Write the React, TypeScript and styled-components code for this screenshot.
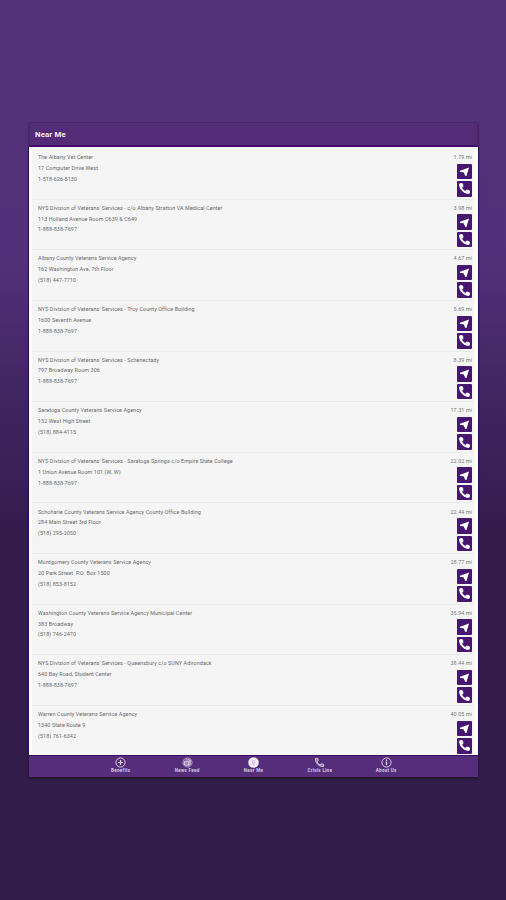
import React from "react";
import styled, { createGlobalStyle } from "styled-components";

const GlobalStyle = createGlobalStyle`
  * { box-sizing: border-box; }
  body { margin: 0; font-family: Roboto, "Liberation Sans", sans-serif; }
`;

const Backdrop = styled.div`
  width: 506px;
  height: 900px;
  padding: 122px 28px 0 29px;
  overflow: hidden;
  background: linear-gradient(#543278 0, #53317a 255px, #3f2560 405px, #331c4c 535px, #321c49 900px);
`;

const Screen = styled.main`
  display: flex;
  flex-direction: column;
  width: 449px;
  height: 655px;
  box-shadow: 0 2px 2px #21142c;
`;

const Header = styled.header`
  display: flex;
  align-items: center;
  height: 25px;
  flex: none;
  padding: 0 5px;
  background: #542b77;
  border: 1px solid #482667;
  border-bottom: 2px solid #430b6b;
`;

const Title = styled.h1`
  margin: 2px 0 0;
  font-size: 7.8px;
  line-height: 10px;
  font-weight: 700;
  letter-spacing: 0.15px;
  color: #f4effa;
`;

const Panel = styled.section`
  flex: 1;
  min-height: 0;
  overflow: hidden;
  padding: 0 4px 0 3px;
  background: #fdfdfe;
  box-shadow: -1px 0 #2b0d5b, 1px 0 #2b0d5b;
`;

const List = styled.ul`
  margin: 0;
  padding: 2px 0 0;
  list-style: none;
  background: #f5f5f5;
`;

const Row = styled.li`
  display: flex;
  justify-content: space-between;
  height: 50.64px;
  padding: 3.2px 2px 0 6px;
  border-bottom: 1px solid #ececed;
`;

const Details = styled.div`
  display: flex;
  flex-direction: column;
`;

const Line = styled.span`
  height: 10.8px;
  font-size: 5.4px;
  line-height: 10px;
  letter-spacing: 0.09px;
  white-space: pre;
  color: #68686c;
`;

const Actions = styled.div`
  display: flex;
  flex-direction: column;
  align-items: flex-end;
`;

const Distance = styled.span`
  height: 12px;
  font-size: 5.4px;
  line-height: 10px;
  letter-spacing: 0.08px;
  white-space: nowrap;
  color: #77777b;
`;

const ActionButton = styled.button`
  display: flex;
  align-items: center;
  justify-content: center;
  flex: none;
  width: 15px;
  height: 15.5px;
  margin: 0 0 2px;
  padding: 0;
  border: 0;
  border-radius: 1px;
  background: #471670;
  color: #ffffff;
`;

const TabBar = styled.nav`
  display: flex;
  justify-content: center;
  height: 22.5px;
  flex: none;
  background: #552d7b;
  border-top: 1.5px solid #3d0b66;
`;

const Tab = styled.a`
  display: flex;
  flex-direction: column;
  align-items: center;
  width: 66.4px;
  padding-top: 1px;
  color: #e6dcf0;
`;

const TabLabel = styled.span`
  margin-top: 0.8px;
  font-size: 4.5px;
  line-height: 5px;
  font-weight: 700;
  letter-spacing: 0.3px;
  white-space: nowrap;
  color: #d8cae6;
`;

const handset =
  "M6.6 10.8c1.4 2.8 3.8 5.1 6.6 6.6l2.2-2.2c.3-.3.7-.4 1-.2 1.1.4 2.3.6 3.6.6.6 0 1 .4 1 1V20c0 .6-.4 1-1 1C10.600 21 3 13.400 3 4c0-.6.4-1 1-1h3.500c.6 0 1 .4 1 1 0 1.300.2 2.500.6 3.600.1.300 0 .7-.2 1z";

const NavigateIcon = () => (
  <svg width="11" height="11" viewBox="0 0 24 24" fill="currentColor">
    <path d="M22 3 2 10.500v2.800l8 .2L14 22h2.200z" />
  </svg>
);

const CallIcon = () => (
  <svg width="13" height="13" viewBox="0 0 24 24" fill="currentColor" stroke="currentColor" strokeWidth="1.8" strokeLinejoin="round">
    <path d={handset} />
  </svg>
);

const tabIcons = {
  benefits: (
    <g fill="none" stroke="currentColor" strokeWidth="2">
      <circle cx="12" cy="12" r="10" />
      <path d="M12 6.500v11M6.500 12h11" strokeWidth="2.500" />
    </g>
  ),
  news: (
    <g fill="none" stroke="currentColor" strokeWidth="2">
      <circle cx="12" cy="12" r="10" strokeOpacity=".7" />
      <path d="M5 9h10v9H8q-3 0-3-3zM15 7h3v8q0 3-3 3" fill="currentColor" fillOpacity=".5" />
      <path d="M8 6h8" />
    </g>
  ),
  near: (
    <g>
      <circle cx="12" cy="12" r="11.500" fill="#f4edfa" />
      <path d="M12 6.500a4 4 0 0 0-4 4c0 3 4 7.500 4 7.500s4-4.500 4-7.500a4 4 0 0 0-4-4z" fill="#cdb8dc" />
      <circle cx="12" cy="10.500" r="1.800" fill="#f4edfa" />
    </g>
  ),
  crisis: <path d={handset} fill="currentColor" fillOpacity=".45" stroke="currentColor" strokeWidth="1.800" />,
  about: (
    <g fill="none" stroke="currentColor" strokeWidth="2">
      <circle cx="12" cy="12" r="10" />
      <path d="M12 10v8M12 5.500v2.500" strokeWidth="3" />
    </g>
  ),
};

const tabs: { icon: keyof typeof tabIcons; label: string }[] = [
  { icon: "benefits", label: "Benefits" },
  { icon: "news", label: "News Feed" },
  { icon: "near", label: "Near Me" },
  { icon: "crisis", label: "Crisis Line" },
  { icon: "about", label: "About Us" },
];

const NYS = "NYS Division of Veterans' Services - ";
const HOTLINE = "1-888-838-7697";

const offices = [
  { name: "The Albany Vet Center", address: "17 Computer Drive West", phone: "1-518-626-5130", miles: "1.79" },
  { name: NYS + "c/o Albany Stratton VA Medical Center", address: "113 Holland Avenue Room C639 & C649", phone: HOTLINE, miles: "3.98" },
  { name: "Albany County Veterans Service Agency", address: "162 Washington Ave, 7th Floor", phone: "(518) 447-7710", miles: "4.67" },
  { name: NYS + "Troy County Office Building", address: "1600 Seventh Avenue", phone: HOTLINE, miles: "5.69" },
  { name: NYS + "Schenectady", address: "797 Broadway Room 306", phone: HOTLINE, miles: "8.39" },
  { name: "Saratoga County Veterans Service Agency", address: "152 West High Street", phone: "(518) 884-4115", miles: "17.31" },
  { name: NYS + "Saratoga Springs c/o Empire State College", address: "1 Union Avenue Room 101 (W, W)", phone: HOTLINE, miles: "22.02" },
  { name: "Schoharie County Veterans Service Agency County Office Building", address: "284 Main Street 3rd Floor", phone: "(518) 295-2050", miles: "22.44" },
  { name: "Montgomery County Veterans Service Agency", address: "20 Park Street  P.O. Box 1500", phone: "(518) 853-8152", miles: "28.77" },
  { name: "Washington County Veterans Service Agency Municipal Center", address: "383 Broadway", phone: "(518) 746-2470", miles: "35.94" },
  { name: NYS + "Queensbury c/o SUNY Adirondack", address: "640 Bay Road, Student Center", phone: HOTLINE, miles: "38.44" },
  { name: "Warren County Veterans Service Agency", address: "1340 State Route 9", phone: "(518) 761-6342", miles: "40.05" },
];

export default function App() {
  return (
    <>
      <GlobalStyle />
      <Backdrop>
        <Screen>
          <Header>
            <Title>Near Me</Title>
          </Header>
          <Panel>
            <List>
              {offices.map((office) => (
                <Row key={office.name}>
                  <Details>
                    <Line>{office.name}</Line>
                    <Line>{office.address}</Line>
                    <Line>{office.phone}</Line>
                  </Details>
                  <Actions>
                    <Distance>{office.miles} mi</Distance>
                    <ActionButton aria-label="Directions">
                      <NavigateIcon />
                    </ActionButton>
                    <ActionButton aria-label="Call">
                      <CallIcon />
                    </ActionButton>
                  </Actions>
                </Row>
              ))}
            </List>
          </Panel>
          <TabBar>
            {tabs.map((tab) => (
              <Tab key={tab.icon}>
                <svg width="11" height="11" viewBox="0 0 24 24">
                  {tabIcons[tab.icon]}
                </svg>
                <TabLabel>{tab.label}</TabLabel>
              </Tab>
            ))}
          </TabBar>
        </Screen>
      </Backdrop>
    </>
  );
}
